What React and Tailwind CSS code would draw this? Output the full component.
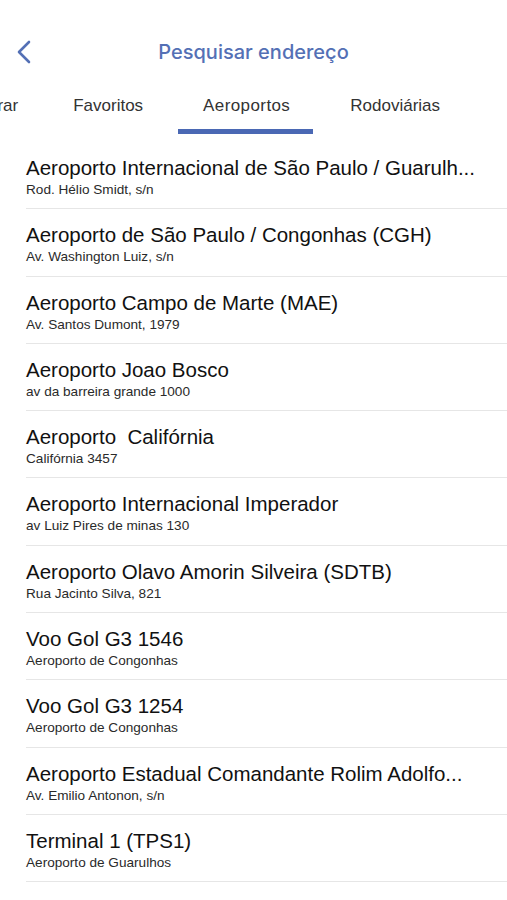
import React from "react";

const items = [
  ["Aeroporto Internacional de São Paulo / Guarulh...", "Rod. Hélio Smidt, s/n"],
  ["Aeroporto de São Paulo / Congonhas (CGH)", "Av. Washington Luiz, s/n"],
  ["Aeroporto Campo de Marte (MAE)", "Av. Santos Dumont, 1979"],
  ["Aeroporto Joao Bosco", "av da barreira grande 1000"],
  ["Aeroporto  Califórnia", "Califórnia 3457"],
  ["Aeroporto Internacional Imperador", "av Luiz Pires de minas 130"],
  ["Aeroporto Olavo Amorin Silveira (SDTB)", "Rua Jacinto Silva, 821"],
  ["Voo Gol G3 1546", "Aeroporto de Congonhas"],
  ["Voo Gol G3 1254", "Aeroporto de Congonhas"],
  ["Aeroporto Estadual Comandante Rolim Adolfo...", "Av. Emilio Antonon, s/n"],
  ["Terminal 1 (TPS1)", "Aeroporto de Guarulhos"],
  ["Terminal de Passageiros Internacional", "Aeroporto de Guarulhos"],
];

const tabs = ["Procurar", "Favoritos", "Aeroportos", "Rodoviárias"];

export default function App() {
  return (
    <div
      className="w-[507px] h-[900px] overflow-hidden bg-white flex flex-col"
      style={{ fontFamily: '"Liberation Sans", Arial, sans-serif' }}
    >
      <div className="shrink-0 h-[84px] pt-[20px] grid grid-cols-[1fr_auto_1fr] items-center">
        <div className="pl-[16px] flex items-center">
          <svg width="15" height="24" viewBox="0 0 15 24" fill="none">
            <path
              d="M13 2 L3 12 L13 22"
              stroke="#5470b5"
              strokeWidth="2.6"
              strokeLinecap="round"
              strokeLinejoin="round"
            />
          </svg>
        </div>
        <span
          className="text-[20px] font-medium text-[#5470b5]"
          style={{ fontFamily: "Inter, sans-serif" }}
        >
          Pesquisar endereço
        </span>
        <div />
      </div>
      <div className="shrink-0 h-[58px] flex items-start ml-[-77px] pt-[10px]">
        {tabs.map((t, i) => {
          const active = t === "Aeroportos";
          return (
            <div
              key={t}
              className={
                i === 0
                  ? "shrink-0 flex flex-col items-stretch pl-[30px] pr-[25px]"
                  : "shrink-0 flex flex-col items-stretch px-[30px]"
              }
            >
              <span
                className={
                  active
                    ? "text-[17px] leading-[24px] text-[#333333] whitespace-nowrap tracking-[0.4px]"
                    : "text-[17px] leading-[24px] text-[#333333] whitespace-nowrap"
                }
              >
                {t}
              </span>
              {active ? (
                <div className="mt-[11px] ml-[-25px] mr-[-23px] h-[5px] bg-[#4a68b4]" />
              ) : null}
            </div>
          );
        })}
      </div>
      <div className="flex flex-col">
        {items.map(([t, s], i) => (
          <div
            key={i}
            className="shrink-0 ml-[26px] pt-[14px] pb-[10.3px] border-b border-[#e6e6e6]"
          >
            <div className="text-[20.5px] leading-[24px] text-[#111111] whitespace-pre">
              {t}
            </div>
            <div className="mt-[2px] text-[13.6px] leading-[16px] text-[#2a2a2a] whitespace-pre">
              {s}
            </div>
          </div>
        ))}
      </div>
    </div>
  );
}
